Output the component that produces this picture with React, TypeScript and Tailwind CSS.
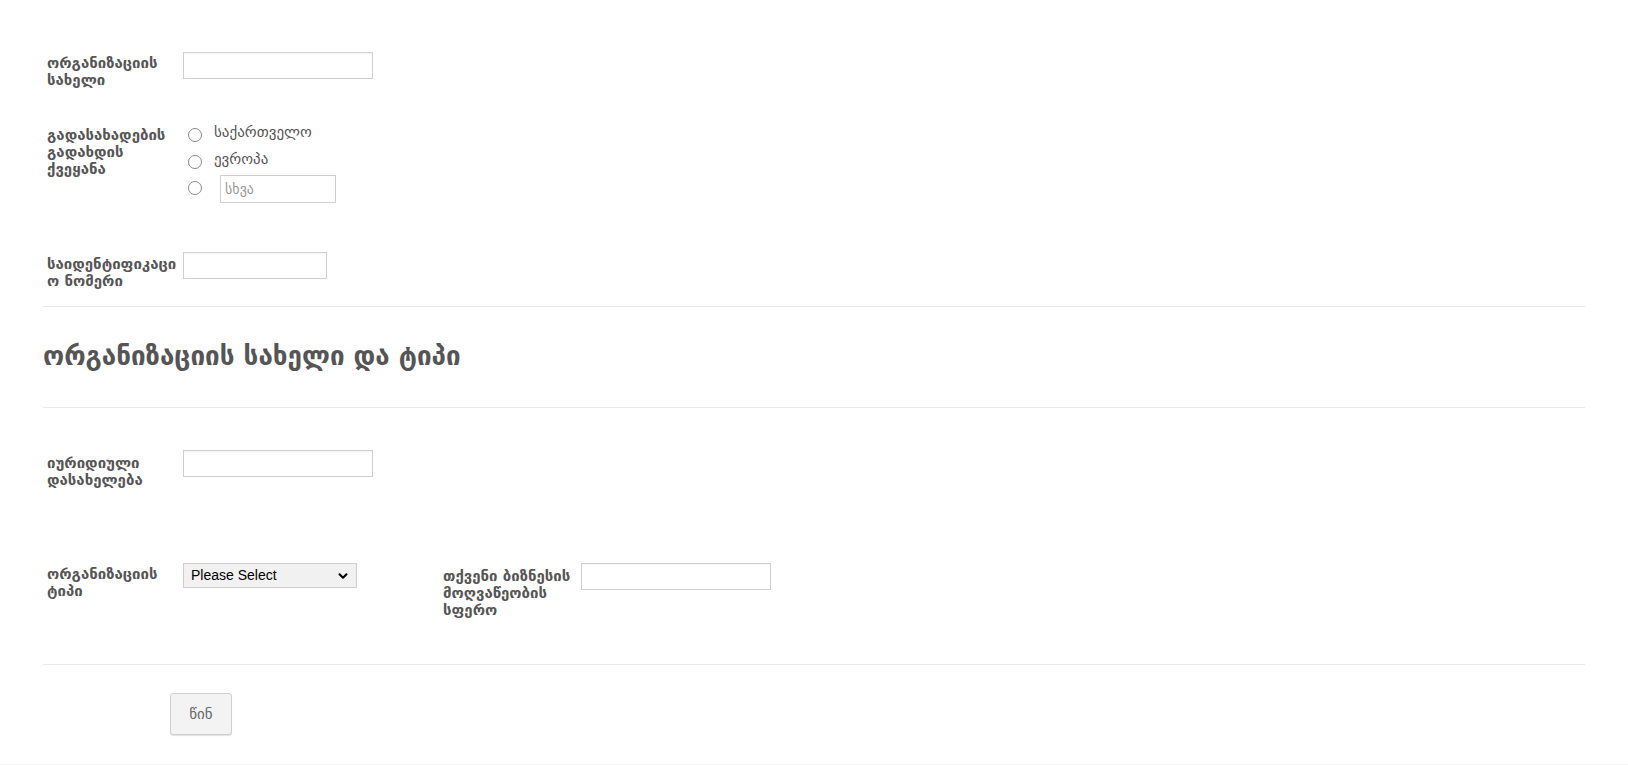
import { ChevronDown } from "lucide-react";

const labelCls =
  "shrink-0 pl-1 pr-1 text-[15px] leading-[17px] font-bold text-[#555] break-words";

function TextInput({ w }: { w: string }) {
  return (
    <div
      className={`${w} h-[27px] shrink-0 border border-[#cfcfcf] bg-white shadow-[inset_0_1px_1px_rgba(0,0,0,0.04)]`}
    />
  );
}

function Radio() {
  return (
    <span className="inline-block w-[14px] h-[14px] shrink-0 rounded-full border border-[#8a8a8a] bg-white" />
  );
}

function Divider() {
  return <div className="h-px bg-[#e8e8e8]" />;
}

export default function App() {
  return (
    <div className="min-h-[765px] bg-white font-['DejaVu_Sans',sans-serif] text-[#555] flex flex-col">
      <div className="px-[43px] flex-1">
        <div className="pt-[52px] flex items-start">
          <div className={`${labelCls} w-[140px] pt-[3px]`}>ორგანიზაციის სახელი</div>
          <TextInput w="w-[190px]" />
        </div>

        <div className="mt-[38px] flex items-start">
          <div className={`${labelCls} w-[140px]`}>გადასახადების გადახდის ქვეყანა</div>
          <div className="flex flex-col text-[15px] leading-[17px] font-normal text-[#555]">
            <div className="flex items-center h-[27px] -mt-[6px] pl-[5px]">
              <Radio />
              <span className="ml-[12px] -mt-[4px]">საქართველო</span>
            </div>
            <div className="flex items-center h-[27px] pl-[5px]">
              <Radio />
              <span className="ml-[12px] -mt-[4px]">ევროპა</span>
            </div>
            <div className="flex items-start pl-[5px]">
              <span className="mt-[6px]">
                <Radio />
              </span>
              <div className="ml-[18px] w-[116px] h-[28px] border border-[#cfcfcf] bg-white flex items-center pl-[4px] text-[14px] text-[#999]">
                სხვა
              </div>
            </div>
          </div>
        </div>

        <div className="mt-[49px] flex items-start">
          <div className={`${labelCls} w-[140px] pt-[4px] break-all`}>საიდენტიფიკაციო ნომერი</div>
          <TextInput w="w-[144px]" />
        </div>

        <div className="mt-[16px]">
          <Divider />
        </div>

        <h2 className="mt-[31px] h-[69px] text-[26px] leading-[36px] font-bold text-[#555]">
          ორგანიზაციის სახელი და ტიპი
        </h2>

        <Divider />

        <div className="mt-[42px] flex items-start">
          <div className={`${labelCls} w-[140px] pt-[5px]`}>იურიდიული დასახელება</div>
          <TextInput w="w-[190px]" />
        </div>

        <div className="mt-[74px] flex items-start">
          <div className="w-[396px] flex items-start shrink-0">
            <div className={`${labelCls} w-[140px] pt-[3px]`}>ორგანიზაციის ტიპი</div>
            <div className="w-[174px] h-[25px] border border-[#cfcfcf] bg-[#f1f1f1] flex items-center justify-between pl-[7px] pr-[6px] font-['Liberation_Sans',sans-serif] text-[14px] text-black">
              <span>Please Select</span>
              <ChevronDown size={14} strokeWidth={3.5} className="text-black" />
            </div>
          </div>
          <div className="flex items-start">
            <div className={`${labelCls} w-[142px] pt-[5px]`}>თქვენი ბიზნესის მოღვაწეობის სფერო</div>
            <TextInput w="w-[190px]" />
          </div>
        </div>

        <div className="mt-[45px]">
          <Divider />
        </div>

        <div className="pl-[127px] pt-[28px]">
          <button className="w-[62px] h-[42px] rounded-[3px] border border-[#cfcfcf] bg-[#f3f3f3] shadow-[0_1px_1px_rgba(0,0,0,0.12)] text-[15px] text-[#666]">
            წინ
          </button>
        </div>
      </div>
      <div className="h-px bg-[#f0f0f0]" />
    </div>
  );
}
